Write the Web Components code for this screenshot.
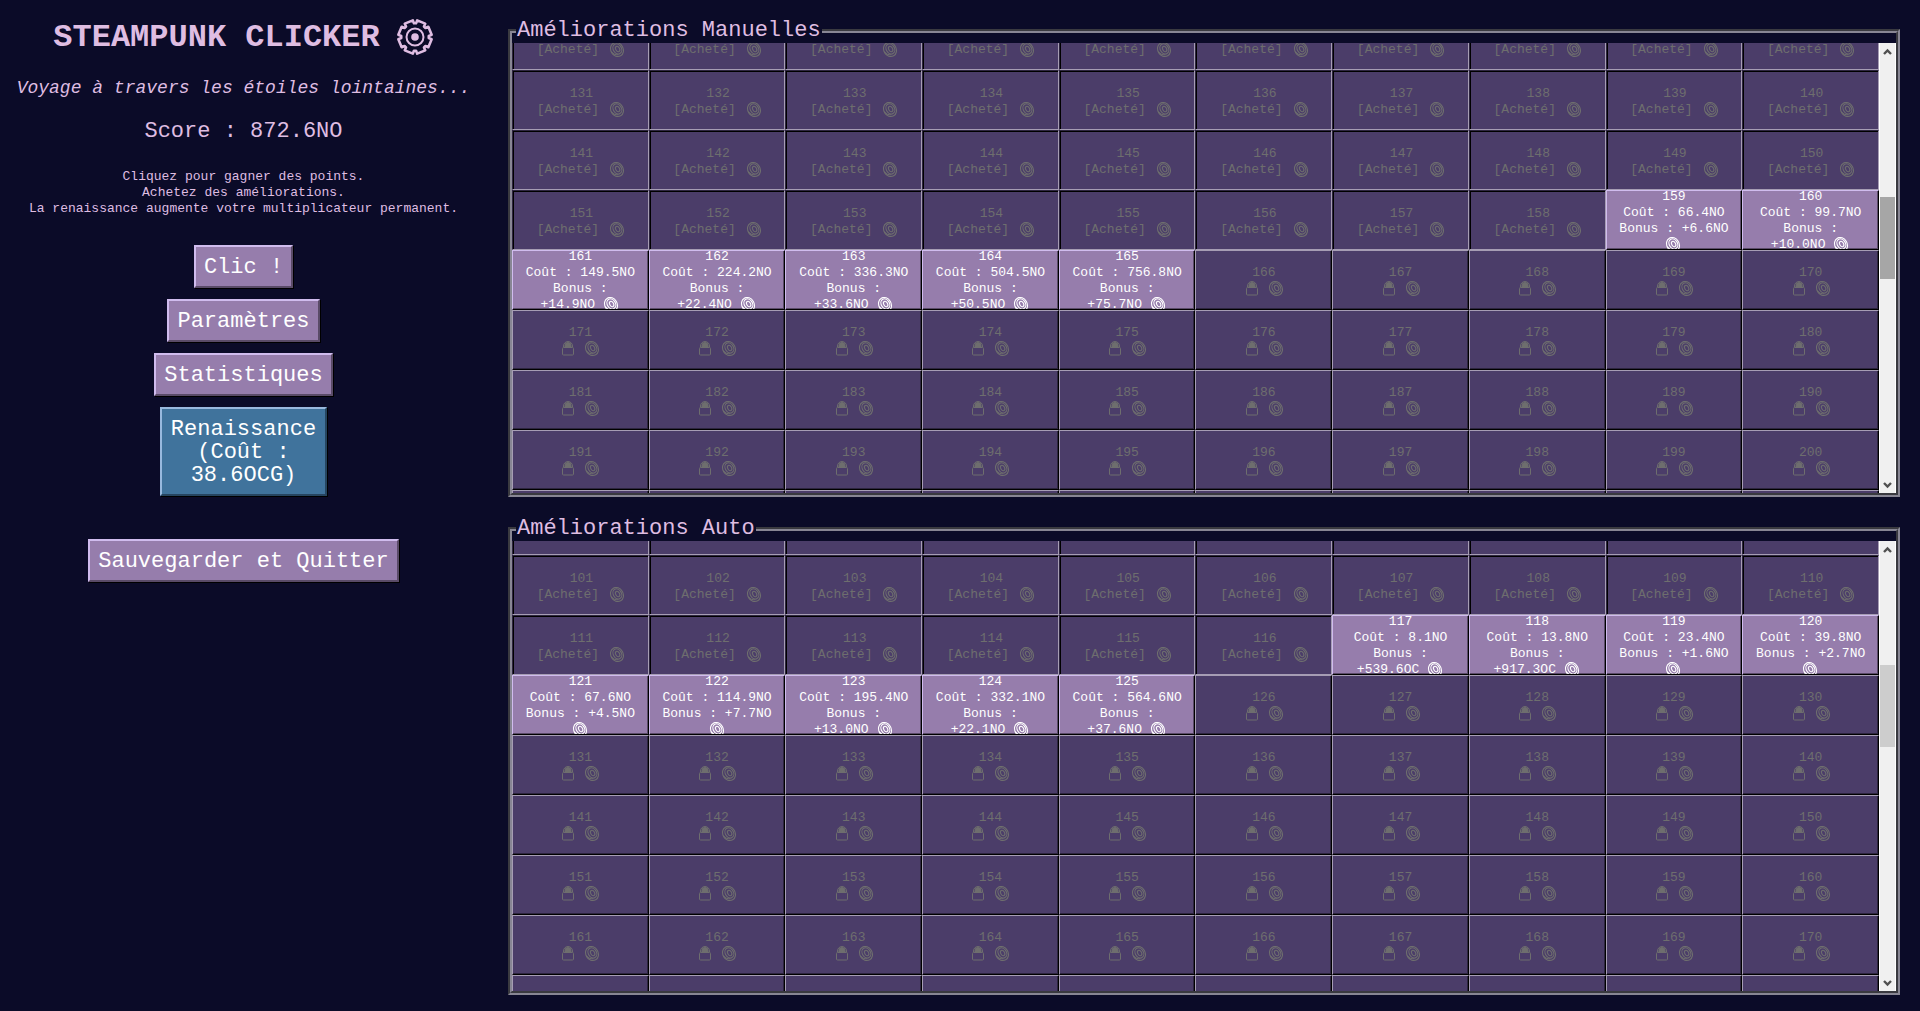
<!DOCTYPE html>
<html lang="fr">
<head>
<meta charset="utf-8">
<title>Steampunk Clicker</title>
<style>
  body { margin: 0; background: #0b0b28; color: #dfbde2; font-family: "Liberation Mono", "Courier New", monospace; }
</style>
</head>
<body>
<steam-app></steam-app>

<template id="t-app">
  <style>
    :host { display: flex; height: 100vh; }
    game-sidebar { flex: 0 0 487px; }
    main { flex: 1; min-width: 0; display: flex; flex-direction: column; gap: 20px; padding: 19px 20px 16px 21px; box-sizing: border-box; }
    upgrade-panel { flex: 1 1 0; min-height: 0; }
  </style>
  <game-sidebar></game-sidebar>
  <main>
    <upgrade-panel label="Améliorations Manuelles" kind="manual"></upgrade-panel>
    <upgrade-panel label="Améliorations Auto" kind="auto"></upgrade-panel>
  </main>
</template>

<template id="t-sidebar">
  <style>
    :host { display: flex; flex-direction: column; align-items: center; padding-top: 18px; box-sizing: border-box; text-align: center; }
    h1 { margin: 0; display: flex; align-items: center; gap: 16px; font-size: 32px; line-height: 40px; font-weight: bold; }
    h1 svg { width: 38px; height: 38px; margin-bottom: 2px; }
    p { margin: 0; }
    .tag { margin-top: 18px; font-size: 18px; line-height: 24px; font-style: italic; white-space: nowrap; }
    .score { margin-top: 20px; font-size: 22px; line-height: 23px; }
    .info { margin-top: 26px; font-size: 13px; line-height: 16px; }
    nav { margin-top: 28px; display: flex; flex-direction: column; align-items: center; gap: 11px; }
    .quit { margin-top: 32px; }
    .rebirth { width: 167px; }
  </style>
  <h1>STEAMPUNK CLICKER <svg viewBox="-19 -19 38 38" fill="none" stroke="currentColor" aria-hidden="true"><path id="gear" stroke-width="2.6" stroke-linejoin="round"/><circle r="8.5" stroke-width="2"/><circle r="3.8" fill="currentColor" stroke="none"/></svg></h1>
  <p class="tag">Voyage à travers les étoiles lointaines...</p>
  <p class="score">Score : 872.6NO</p>
  <p class="info">Cliquez pour gagner des points.<br>Achetez des améliorations.<br>La renaissance augmente votre multiplicateur permanent.</p>
  <nav>
    <relief-button>Clic !</relief-button>
    <relief-button>Paramètres</relief-button>
    <relief-button>Statistiques</relief-button>
    <relief-button class="rebirth" tone="blue">Renaissance<br>(Coût :<br>38.6OCG)</relief-button>
    <relief-button class="quit">Sauvegarder et Quitter</relief-button>
  </nav>
</template>

<template id="t-relief">
  <style>
    :host { display: block; --face: #967dac; --hi: #d0bcee; --lo: #5a4b68; }
    :host([tone="blue"]) { --face: #40739c; --hi: #99b9de; --lo: #264560; }
    button { display: block; width: 100%; margin: 0; padding: 9px 8px 7px; border: 2px solid; border-color: var(--hi) var(--lo) var(--lo) var(--hi); box-shadow: 1px 1px 0 #000; background: var(--face); color: #fff; font: 22px/23px "Liberation Mono", "Courier New", monospace; }
  </style>
  <button type="button"><slot></slot></button>
</template>

<template id="t-panel">
  <style>
    :host { display: block; }
    fieldset { margin: 0; height: 100%; box-sizing: border-box; min-width: 0; padding: 0; border: 4px groove #888694; }
    legend { margin-left: 4px; padding: 0 1px; font-size: 22px; line-height: 24px; color: #dfbde2; }
    .body { display: flex; height: 100%; box-sizing: border-box; }
    .list { flex: 1; min-width: 0; overflow: hidden; display: grid; grid-template-columns: repeat(10, minmax(0, 1fr)); grid-auto-rows: 60px; }
  </style>
  <fieldset>
    <legend></legend>
    <div class="body"><div class="list"></div><scroll-rail></scroll-rail></div>
  </fieldset>
</template>

<template id="t-rail">
  <style>
    :host { flex: 0 0 17px; display: flex; flex-direction: column; background: #f0f0f0; border: solid #fff; border-width: 0 1px; box-sizing: border-box; }
    button { flex: 0 0 17px; height: 17px; margin: 0; padding: 0; border: 0; background: none; display: flex; align-items: center; justify-content: center; }
    svg { width: 9px; height: 8px; }
    .track { flex: 1; display: flex; flex-direction: column; }
    .thumb { height: 82px; background: var(--thumb, #cdcdcd); }
  </style>
  <button type="button" aria-label="Monter"><svg viewBox="0 0 9 8"><path d="M1 6 4.5 2.5 8 6" fill="none" stroke="#505050" stroke-width="2.4"/></svg></button>
  <div class="track"><div class="before"></div><div class="thumb"></div></div>
  <button type="button" aria-label="Descendre"><svg viewBox="0 0 9 8"><path d="M1 2 4.5 5.5 8 2" fill="none" stroke="#505050" stroke-width="2.4"/></svg></button>
</template>

<template id="t-cell">
  <style>
    :host { display: block; min-width: 0; }
    button { width: 100%; height: 60px; margin: 0; box-sizing: border-box; overflow: hidden; display: flex; flex-direction: column; align-items: center; justify-content: center; padding: 2px 0 0; border: 1px solid; border-color: #a69db4 #000 #000 #a69db4; box-shadow: inset -1px -1px 0 #2d253f; background: #4b3d69; color: #6e6e6e; font: 13px/16px "Liberation Mono", "Courier New", monospace; }
    :host([state="bought"]) button { border-color: #2d253f #a69db4 #a69db4 #2d253f; box-shadow: inset 1px 1px 0 #000; padding: 4px 0 0 2px; }
    :host([state="open"]) button { background: #967dac; color: #fff; border-color: #d0bcee #000 #000 #d0bcee; box-shadow: inset -1px -1px 0 #5a4b68; }
    .line { flex: 0 0 16px; height: 16px; display: flex; gap: 8px; white-space: nowrap; }
    .line.out { visibility: hidden; }
    svg { display: block; width: 17px; height: 16px; fill: none; stroke: currentColor; }
    :host([state="bought"]) .line { gap: 10px; }
  </style>
  <button type="button"></button>
</template>

<script>
  const stamp = (el, id) => {
    const root = el.attachShadow({ mode: "open" });
    root.append(document.getElementById(id).content.cloneNode(true));
    return root;
  };

  const SWIRL = '<svg viewBox="0 0 17 16" aria-hidden="true"><g transform="rotate(-30 8 7.5)" stroke-width="1.1"><ellipse cx="8" cy="7.5" rx="6.2" ry="7.3"/><ellipse cx="8.6" cy="7.2" rx="4.1" ry="5.3"/><ellipse cx="8.8" cy="7.4" rx="1.9" ry="2.9"/></g><path d="M2.500 9.500c1.500 2.600 3.500 3.500 7 3.300" stroke-width="1"/></svg>';
  const LOCK = '<svg viewBox="0 0 17 16" aria-hidden="true"><rect x="3.500" y="6.500" width="11" height="7.500" rx="1"/><path d="M4.500 6V5a4.500 4.500 0 0 1 9 0v1"/><path d="M6 6.500V4.500a3 3 0 0 1 6 0v2z" fill="currentColor"/></svg>';

  // First visible upgrade, scroll offset inside its row, and the affordable ones.
  const LISTS = {
    manual: {
      first: 121, offset: 33, thumb: 137, color: "#a6a6a6",
      open: {
        159: ["66.4NO", "+6.6NO"], 160: ["99.7NO", "+10.0NO"], 161: ["149.5NO", "+14.9NO"],
        162: ["224.2NO", "+22.4NO"], 163: ["336.3NO", "+33.6NO"], 164: ["504.5NO", "+50.5NO"],
        165: ["756.8NO", "+75.7NO"]
      }
    },
    auto: {
      first: 91, offset: 46, thumb: 107, color: "#cdcdcd",
      open: {
        117: ["8.1NO", "+539.6OC"], 118: ["13.8NO", "+917.3OC"], 119: ["23.4NO", "+1.6NO"],
        120: ["39.8NO", "+2.7NO"], 121: ["67.6NO", "+4.5NO"], 122: ["114.9NO", "+7.7NO"],
        123: ["195.4NO", "+13.0NO"], 124: ["332.1NO", "+22.1NO"], 125: ["564.6NO", "+37.6NO"]
      }
    }
  };

  customElements.define("relief-button", class extends HTMLElement {
    constructor() { super(); stamp(this, "t-relief"); }
  });

  customElements.define("upgrade-cell", class extends HTMLElement {
    constructor() { super(); this.root = stamp(this, "t-cell"); }
    connectedCallback() {
      const n = this.getAttribute("number");
      const state = this.getAttribute("state");
      const lines = [`<span>${n}</span>`];
      if (state === "bought") lines.push(`<span>[Acheté]</span>${SWIRL}`);
      else if (state === "locked") lines.push(LOCK + SWIRL);
      else {
        const bonus = this.getAttribute("bonus");
        lines.push(`<span>Coût : ${this.getAttribute("cost")}</span>`);
        if (bonus.length < 7) lines.push(`<span>Bonus : ${bonus}</span>`, SWIRL);
        else lines.push("<span>Bonus :</span>", `<span>${bonus}</span>${SWIRL}`);
      }
      const button = this.root.querySelector("button");
      button.disabled = state !== "open";
      button.innerHTML = lines.map(l => `<span class="line">${l}</span>`).join("");
    }
    // Skips painting the lines that are scrolled out of the given box.
    cull(box) {
      for (const line of this.root.querySelectorAll(".line")) {
        const r = line.getBoundingClientRect();
        line.classList.toggle("out", r.bottom < box.top + 4 || r.top > box.bottom - 4);
      }
    }
  });

  customElements.define("scroll-rail", class extends HTMLElement {
    constructor() { super(); this.root = stamp(this, "t-rail"); }
    set position(px) { this.root.querySelector(".before").style.height = px + "px"; }
  });

  customElements.define("upgrade-panel", class extends HTMLElement {
    constructor() { super(); this.root = stamp(this, "t-panel"); }
    connectedCallback() {
      const data = LISTS[this.getAttribute("kind")];
      const lastOpen = Math.max(...Object.keys(data.open));
      const list = this.root.querySelector(".list");
      this.root.querySelector("legend").textContent = this.getAttribute("label");
      for (let n = data.first; n < data.first + 90; n++) {
        const cell = document.createElement("upgrade-cell");
        cell.setAttribute("number", n);
        const offer = data.open[n];
        cell.setAttribute("state", offer ? "open" : n < lastOpen ? "bought" : "locked");
        if (offer) { cell.setAttribute("cost", offer[0]); cell.setAttribute("bonus", offer[1]); }
        list.append(cell);
      }
      const rail = this.root.querySelector("scroll-rail");
      rail.position = data.thumb;
      rail.style.setProperty("--thumb", data.color);
      const refresh = () => {
        const box = list.getBoundingClientRect();
        for (const cell of list.children) cell.cull(box);
      };
      list.addEventListener("scroll", refresh);
      new ResizeObserver(refresh).observe(list);
      list.scrollTop = data.offset;
      refresh();
    }
  });

  customElements.define("game-sidebar", class extends HTMLElement {
    constructor() {
      super();
      const root = stamp(this, "t-sidebar");
      const pts = [];
      for (let i = 0; i < 8; i++) {
        for (const [da, r] of [[-18, 13.8], [-15, 16.8], [15, 16.8], [18, 13.8]]) {
          const a = (i * 45 + 22.5 + da) * Math.PI / 180;
          pts.push((r * Math.cos(a)).toFixed(2) + " " + (r * Math.sin(a)).toFixed(2));
        }
      }
      root.getElementById("gear").setAttribute("d", "M" + pts.join("L") + "Z");
    }
  });

  customElements.define("steam-app", class extends HTMLElement {
    constructor() { super(); stamp(this, "t-app"); }
  });
</script>
</body>
</html>
